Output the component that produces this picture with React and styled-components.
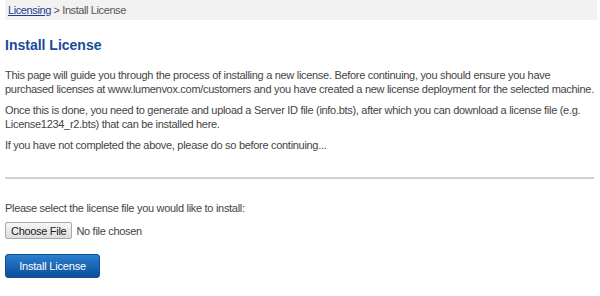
import React from "react";
import styled, { createGlobalStyle } from "styled-components";

const Global = createGlobalStyle`
  html, body {
    margin: 0;
    padding: 0;
    background: #fff;
  }
  body {
    font-family: "Liberation Sans", Arial, sans-serif;
    font-size: 11px;
    letter-spacing: -0.3px;
    color: #444;
  }
`;

const App = () => {
  return (
    <>
      <Global />
      <Page>
        <Crumbs>
          <CrumbLink href="#">Licensing</CrumbLink> &gt; Install License
        </Crumbs>
        <Title>Install License</Title>
        <Text>
          This page will guide you through the process of installing a new
          license. Before continuing, you should ensure you have purchased
          licenses at www.lumenvox.com/customers and you have created a new
          license deployment for the selected machine.
        </Text>
        <Text>
          Once this is done, you need to generate and upload a Server ID file
          (info.bts), after which you can download a license file (e.g.
          License1234_r2.bts) that can be installed here.
        </Text>
        <Text>
          If you have not completed the above, please do so before
          continuing...
        </Text>
        <Divider />
        <Form>
          <Prompt>Please select the license file you would like to install:</Prompt>
          <FileRow>
            <ChooseButton type="button">Choose File</ChooseButton>
            <FileName>No file chosen</FileName>
          </FileRow>
          <Submit type="button">Install License</Submit>
        </Form>
      </Page>
    </>
  );
};

const Page = styled.div`
  padding: 0 3px 0 5px;
`;

const Crumbs = styled.div`
  height: 20px;
  line-height: 20px;
  background: #f2f2f2;
  padding: 0 3px;
  color: #555;
  font-size: 11px;
  letter-spacing: -0.4px;
`;

const CrumbLink = styled.a`
  color: #1c3d8f;
  text-decoration: underline;
`;

const Title = styled.h1`
  margin: 17px 0 15px;
  font-size: 14px;
  font-weight: bold;
  letter-spacing: 0;
  color: #1a4a96;
`;

const Text = styled.p`
  margin: 0 0 7px;
  line-height: 14px;
  font-size: 11px;
  color: #444;
`;

const Divider = styled.hr`
  margin: 25px 3px 22px 0;
  border: 0;
  border-top: 2px solid #d0d0d0;
  height: 0;
`;

const Form = styled.div``;

const Prompt = styled(Text)`
  margin-bottom: 7px;
`;

const FileRow = styled.div`
  display: flex;
  align-items: center;
  gap: 4px;
  margin-bottom: 15px;
`;

const ChooseButton = styled.button`
  font-family: "Liberation Sans", Arial, sans-serif;
  font-size: 11px;
  letter-spacing: -0.3px;
  color: #222;
  height: 17px;
  padding: 0 5px;
  border: 1px solid #a9a9a9;
  border-radius: 2px;
  background: linear-gradient(#f6f6f6, #dedede);
`;

const FileName = styled.span`
  color: #444;
`;

const Submit = styled.button`
  display: block;
  width: 95px;
  height: 24px;
  border: 1px solid #0f4f94;
  border-radius: 3px;
  background: linear-gradient(#2a7fd0, #0a4f9a);
  color: #fff;
  font-family: "Liberation Sans", Arial, sans-serif;
  font-size: 11px;
  letter-spacing: -0.2px;
`;

export default App;
